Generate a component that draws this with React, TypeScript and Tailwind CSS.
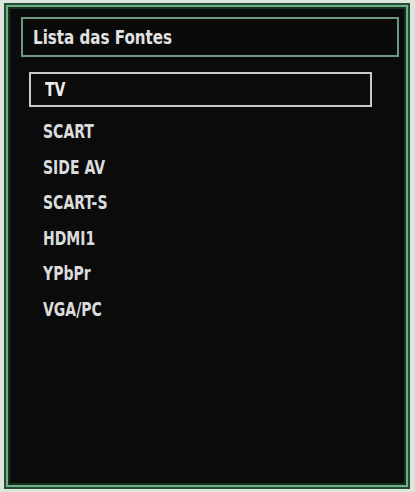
const sources = ['SCART', 'SIDE AV', 'SCART-S', 'HDMI1', 'YPbPr', 'VGA/PC'];

const osdFont = {
  fontFamily: '"DejaVu Sans Condensed", "Liberation Sans", sans-serif',
};

export default function App() {
  return (
    <div className="w-[415px] h-[492px] bg-[#dce6df] pt-[3px] pl-[4px] pr-[5px] pb-[3px]" style={osdFont}>
      {/* triple green frame */}
      <div className="h-full border-2 border-[#244d33]">
        <div className="h-full border-2 border-[#6fae88]">
          <div className="h-full border-2 border-[#17301f] bg-[#0b0b0b] pl-[11px] pr-[5px] pt-[8px]">
            <div className="h-[40px] border-2 border-[#6d977e] bg-[#0a0a0a] flex items-center pl-[10px]">
              <span className="inline-block origin-left scale-x-[0.84] text-[20px] font-bold text-[#e2e2e2] leading-none">
                Lista das Fontes
              </span>
            </div>

            <ul className="mt-[15px] pl-[8px] pr-[27px]">
              <li className="h-[35px] border-2 border-[#c8c8c8] flex items-center pl-[14px]">
                <span className="inline-block origin-left scale-x-[0.82] text-[19px] font-bold text-[#ececec] leading-none">
                  TV
                </span>
              </li>
              {sources.map((s, i) => (
                <li
                  key={s}
                  className={`h-[35.5px] flex items-center pl-[14px] ${i === 0 ? 'mt-[7px]' : ''}`}
                >
                  <span className="inline-block origin-left scale-x-[0.82] text-[19px] font-bold text-[#dcdcdc] leading-none">
                    {s}
                  </span>
                </li>
              ))}
            </ul>
          </div>
        </div>
      </div>
    </div>
  );
}
